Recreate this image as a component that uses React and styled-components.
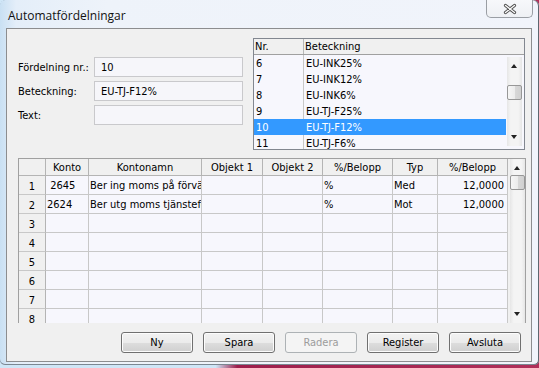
import React from 'react'
import styled, { createGlobalStyle } from 'styled-components'

const GlobalStyle = createGlobalStyle`
  body {
    margin: 0;
    background: linear-gradient(90deg, #cfe6f7 0, #cfe6f7 40%, #9d1f4c 44%, #b0305a 100%);
    font-family: "DejaVu Sans Condensed", "DejaVu Sans", sans-serif;
    font-size: 11px;
    color: #000;
  }
`

const listItems = [
  { nr: '6', name: 'EU-INK25%' },
  { nr: '7', name: 'EU-INK12%' },
  { nr: '8', name: 'EU-INK6%' },
  { nr: '9', name: 'EU-TJ-F25%' },
  { nr: '10', name: 'EU-TJ-F12%', selected: true },
  { nr: '11', name: 'EU-TJ-F6%' },
]

const columns = [
  { label: '', width: 27 },
  { label: 'Konto', width: 43 },
  { label: 'Kontonamn', width: 113 },
  { label: 'Objekt 1', width: 61 },
  { label: 'Objekt 2', width: 60 },
  { label: '%/Belopp', width: 70 },
  { label: 'Typ', width: 45 },
  { label: '%/Belopp', width: 70 },
]

const rows = [
  ['\u00a02645', 'Ber ing moms på förvärv', '', '', '%', 'Med', '12,0000'],
  ['2624', 'Ber utg moms tjänsteförvärv', '', '', '%', 'Mot', '12,0000'],
  [], [], [], [], [], [],
]

const ScrollBar = ({ thumbTop, height }) => (
  <Track style={{ height }}>
    <Arrow $pos="top" $up />
    <Thumb style={{ top: thumbTop }} />
    <Arrow $pos="bottom" />
  </Track>
)

const App = () => {
  return (
    <>
      <GlobalStyle />
      <Window>
        <TitleBar>
          <Title>Automatfördelningar</Title>
          <CloseButton>
            <svg width="16" height="12" viewBox="0 0 16 12">
              <path d="M3.5 2.5 L12.5 9.5 M12.5 2.5 L3.5 9.5" stroke="#4a4a4a" strokeWidth="3.2" strokeLinecap="round" />
              <path d="M3.5 2.5 L12.5 9.5 M12.5 2.5 L3.5 9.5" stroke="#f8f8f8" strokeWidth="1.4" strokeLinecap="round" />
            </svg>
          </CloseButton>
        </TitleBar>
        <Client>
          <TopSection>
            <Form>
              <FieldRow>
                <Label>Fördelning nr.:</Label>
                <Field>10</Field>
              </FieldRow>
              <FieldRow>
                <Label>Beteckning:</Label>
                <Field>EU-TJ-F12%</Field>
              </FieldRow>
              <FieldRow>
                <Label>Text:</Label>
                <Field />
              </FieldRow>
            </Form>
            <ListBox>
              <ListHeader>
                <ListHeadCell $w={50}>Nr.</ListHeadCell>
                <ListHeadCell>Beteckning</ListHeadCell>
              </ListHeader>
              <ListBody>
                <ListRows>
                  {listItems.map((item) => (
                    <ListRow key={item.nr} $selected={item.selected}>
                      <ListCell $w={50}>{item.nr}</ListCell>
                      <ListCell>{item.name}</ListCell>
                    </ListRow>
                  ))}
                </ListRows>
                <ListScroll>
                  <ScrollBar height={89} thumbTop={28} />
                </ListScroll>
              </ListBody>
            </ListBox>
          </TopSection>

          <GridWrap>
            <Table>
              <GridRow>
                {columns.map((c, i) => (
                  <HeadCell key={i} $w={c.width}>{c.label}</HeadCell>
                ))}
              </GridRow>
              {rows.map((r, i) => (
                <GridRow key={i}>
                  <RowHead $w={columns[0].width}>{i + 1}</RowHead>
                  {columns.slice(1).map((c, j) => (
                    <Cell key={j} $w={c.width} $right={j === 6}>{r[j] || ''}</Cell>
                  ))}
                </GridRow>
              ))}
            </Table>
            <GridScroll>
              <ScrollBar height={164} thumbTop={16} />
            </GridScroll>
          </GridWrap>

          <ButtonRow>
            <Button>Ny</Button>
            <Button>Spara</Button>
            <Button disabled>Radera</Button>
            <Button>Register</Button>
            <Button>Avsluta</Button>
          </ButtonRow>
        </Client>
      </Window>
    </>
  )
}

export default App

const Window = styled.div`
  width: 539px;
  height: 365px;
  box-sizing: border-box;
  padding: 0 7px 3px 6px;
  display: flex;
  flex-direction: column;
  border-radius: 6px 6px 5px 5px;
  background: linear-gradient(90deg, #c9e0f3 0, #e4eef9 3%, #eef3fa 20%, #f1f4fb 100%);
  box-shadow: inset -1px 0 0 #5d6770, inset 0 -1px 0 #7b8792;
`

const TitleBar = styled.div`
  height: 28px;
  display: flex;
  justify-content: space-between;
  align-items: flex-start;
`

const Title = styled.div`
  font-family: "Open Sans", "Noto Sans", sans-serif;
  font-size: 12px;
  padding: 7px 0 0 2px;
  color: #111;
`

const CloseButton = styled.div`
  width: 47px;
  height: 18px;
  margin-right: -1px;
  box-sizing: border-box;
  border: 1px solid #9a9ea4;
  border-top: none;
  border-radius: 0 0 5px 5px;
  background: linear-gradient(180deg, #f7f8fb, #eef0f4);
  display: flex;
  align-items: center;
  justify-content: center;
`

const Client = styled.div`
  flex: 1;
  border: 1px solid #8c8d8f;
  background: #f0f0f0;
  display: flex;
  flex-direction: column;
`

const TopSection = styled.div`
  display: flex;
  padding: 9px 6px 0 11px;
`

const Form = styled.div`
  width: 235px;
  padding-top: 19px;
  display: flex;
  flex-direction: column;
  gap: 4px;
`

const FieldRow = styled.div`
  display: grid;
  grid-template-columns: 76px 149px;
  align-items: center;
  height: 20px;
`

const Label = styled.div`
  white-space: nowrap;
`

const Field = styled.div`
  height: 20px;
  box-sizing: border-box;
  border: 1px solid #c9c9cc;
  background: #f6f6fa;
  padding: 3px 6px 0;
`

const ListBox = styled.div`
  width: 272px;
  height: 112px;
  box-sizing: border-box;
  border: 1px solid #828790;
  background: #f7f7fd;
  overflow: hidden;
  display: flex;
  flex-direction: column;
`

const ListHeader = styled.div`
  height: 16px;
  flex: none;
  display: flex;
  background: #f0f0f0;
  border-bottom: 1px solid #a0a0a0;
  box-sizing: border-box;
`

const ListHeadCell = styled.div`
  width: ${(p) => (p.$w ? `${p.$w}px` : 'auto')};
  flex: ${(p) => (p.$w ? 'none' : '1')};
  box-sizing: border-box;
  padding: 1px 0 0 1px;
  border-right: ${(p) => (p.$w ? '1px solid #b8b8b8' : 'none')};
`

const ListBody = styled.div`
  flex: 1;
  display: flex;
  min-height: 0;
`

const ListRows = styled.div`
  flex: 1;
  background: linear-gradient(90deg, transparent 49px, #c8c8c8 49px, #c8c8c8 50px, transparent 50px);
`

const ListRow = styled.div`
  height: 16px;
  display: flex;
  background: ${(p) => (p.$selected ? '#3399ff' : 'transparent')};
  color: ${(p) => (p.$selected ? '#fff' : '#000')};
`

const ListCell = styled.div`
  width: ${(p) => (p.$w ? `${p.$w}px` : 'auto')};
  flex: ${(p) => (p.$w ? 'none' : '1')};
  padding: 2px 0 0 2px;
  box-sizing: border-box;
  white-space: nowrap;
`

const ListScroll = styled.div`
  padding: 2px 2px 0 1px;
`

const Track = styled.div`
  position: relative;
  width: 15px;
  box-sizing: border-box;
  background: linear-gradient(90deg, #e6e6e6 0, #f4f4f4 25%, #f4f4f4 75%, #e6e6e6 100%);
`

const Arrow = styled.div`
  position: absolute;
  left: 4px;
  ${(p) => (p.$pos === 'top' ? 'top: 7px;' : 'bottom: 7px;')}
  width: 0;
  height: 0;
  border-left: 3.5px solid transparent;
  border-right: 3.5px solid transparent;
  ${(p) => (p.$up ? 'border-bottom: 4px solid #222;' : 'border-top: 4px solid #222;')}
`

const Thumb = styled.div`
  position: absolute;
  left: 0;
  width: 15px;
  height: 15px;
  box-sizing: border-box;
  border: 1px solid #979797;
  border-radius: 2px;
  background: linear-gradient(90deg, #f6f6f6 0, #ececec 50%, #d8d8d8 51%, #d0d0d0 100%);
`

const GridWrap = styled.div`
  margin: 8px 5px 0 11px;
  height: 165px;
  box-sizing: border-box;
  border: 1px solid #a0a0a0;
  border-bottom: none;
  display: flex;
  overflow: hidden;
`

const Table = styled.div`
  width: 489px;
  display: flex;
  flex-direction: column;
`

const GridRow = styled.div`
  display: flex;
  flex: none;
`

const HeadCell = styled.div`
  width: ${(p) => p.$w}px;
  height: 17px;
  box-sizing: border-box;
  background: #f0f0f0;
  border-right: 1px solid #b4b4b4;
  border-bottom: 1px solid #b4b4b4;
  text-align: center;
  padding-top: 2px;
  white-space: nowrap;
`

const RowHead = styled.div`
  width: ${(p) => p.$w}px;
  height: 19px;
  box-sizing: border-box;
  background: #f0f0f0;
  border-right: 1px solid #b4b4b4;
  border-bottom: 1px solid #c8c8c8;
  text-align: center;
  padding-top: 4px;
`

const Cell = styled.div`
  width: ${(p) => p.$w}px;
  height: 19px;
  box-sizing: border-box;
  background: #f7f7fd;
  border-right: 1px solid #c8c8c8;
  border-bottom: 1px solid #c8c8c8;
  padding: 3px 3px 0 1px;
  white-space: nowrap;
  overflow: hidden;
  text-align: ${(p) => (p.$right ? 'right' : 'left')};
`

const GridScroll = styled.div`
  margin-left: 2px;
  width: 16px;
  display: flex;
`

const ButtonRow = styled.div`
  display: flex;
  justify-content: flex-end;
  gap: 10px;
  padding: 9px 10px 0 0;
`

const Button = styled.button`
  width: 72px;
  height: 21px;
  box-sizing: border-box;
  font-family: inherit;
  font-size: 11px;
  padding: 0;
  border-radius: 3px;
  border: 1px solid ${(p) => (p.disabled ? '#adb2b5' : '#707070')};
  color: ${(p) => (p.disabled ? '#9c9c9c' : '#000')};
  background: ${(p) =>
    p.disabled
      ? '#f4f4f4'
      : 'linear-gradient(180deg, #f2f2f2 0, #ebebeb 50%, #dddddd 51%, #cfcfcf 100%)'};
  box-shadow: ${(p) => (p.disabled ? 'none' : 'inset 0 0 0 1px #fcfcfc')};
`
